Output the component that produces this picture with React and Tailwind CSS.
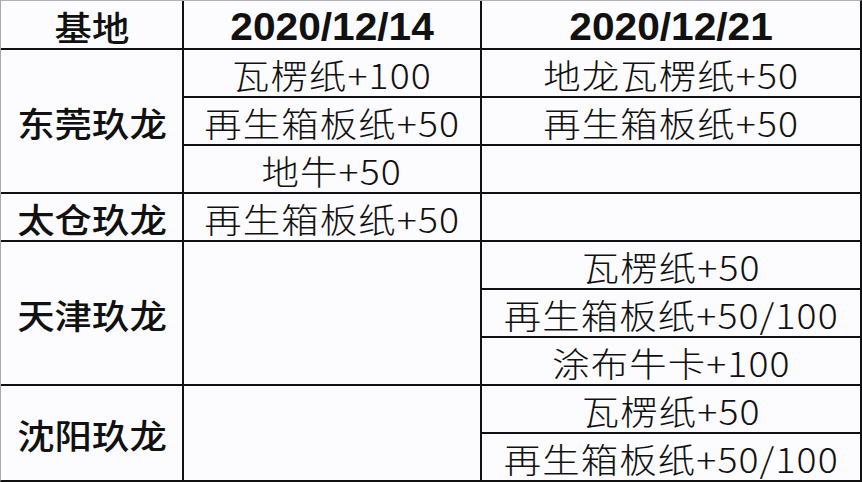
import React from "react";

const cjk = "font-['Noto_Sans_CJK_SC',sans-serif]";

function Cell({ pos, children, bold, date, className = "" }) {
  return (
    <div className={`bg-[#fcfbfd] flex items-center justify-center ${pos} ${className}`}>
      {children ? (
        date ? (
          <span className="inline-block whitespace-nowrap font-['Liberation_Sans',Arial,sans-serif] font-bold text-[38px] leading-[44px] text-[#111] scale-x-[107%] mt-[5px]">
            {children}
          </span>
        ) : bold ? (
          <span
            className={`inline-block whitespace-nowrap ${cjk} font-medium text-[34px] leading-[44px] text-[#111] scale-x-110 mt-[4px]`}
          >
            {children}
          </span>
        ) : (
          <span
            className={`inline-block whitespace-nowrap ${cjk} font-light tracking-[1px] text-[34px] leading-[44px] text-[#111] scale-x-110 mt-[4px]`}
          >
            {children}
          </span>
        )
      ) : null}
    </div>
  );
}

export default function App() {
  return (
    <div className="w-[862px] h-[482px] bg-[#111] border-t border-l border-t-[#b0b0b0] border-l-[#a8a8a8] border-r-2 border-b-2 border-r-[#111] border-b-[#111] grid grid-cols-[181px_296px_378px] grid-rows-[47px_repeat(9,46px)] gap-[2px]">
      <Cell pos="col-start-1 row-start-1" bold>基地</Cell>
      <Cell pos="col-start-2 row-start-1" date>2020/12/14</Cell>
      <Cell pos="col-start-3 row-start-1" date>2020/12/21</Cell>

      <Cell pos="col-start-1 row-start-2 row-span-3" bold>东莞玖龙</Cell>
      <Cell pos="col-start-2 row-start-2">瓦楞纸+100</Cell>
      <Cell pos="col-start-2 row-start-3">再生箱板纸+50</Cell>
      <Cell pos="col-start-2 row-start-4">地牛+50</Cell>
      <Cell pos="col-start-3 row-start-2">地龙瓦楞纸+50</Cell>
      <Cell pos="col-start-3 row-start-3">再生箱板纸+50</Cell>
      <Cell pos="col-start-3 row-start-4" />

      <Cell pos="col-start-1 row-start-5" bold>太仓玖龙</Cell>
      <Cell pos="col-start-2 row-start-5">再生箱板纸+50</Cell>
      <Cell pos="col-start-3 row-start-5" />

      <Cell pos="col-start-1 row-start-6 row-span-3" bold>天津玖龙</Cell>
      <Cell pos="col-start-2 row-start-6 row-span-3" />
      <Cell pos="col-start-3 row-start-6">瓦楞纸+50</Cell>
      <Cell pos="col-start-3 row-start-7">再生箱板纸+50/100</Cell>
      <Cell pos="col-start-3 row-start-8">涂布牛卡+100</Cell>

      <Cell pos="col-start-1 row-start-9 row-span-2" bold>沈阳玖龙</Cell>
      <Cell pos="col-start-2 row-start-9 row-span-2" />
      <Cell pos="col-start-3 row-start-9">瓦楞纸+50</Cell>
      <Cell pos="col-start-3 row-start-10">再生箱板纸+50/100</Cell>
    </div>
  );
}
